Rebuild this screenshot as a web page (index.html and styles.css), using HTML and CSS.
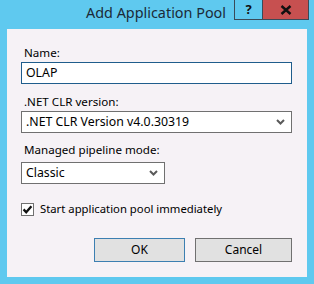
FILE: index.html
```html
<html lang="en">
<head>
    <meta charset="UTF-8">
    <title>Add Application Pool</title>
    <link rel="stylesheet" href="styles.css">
</head>
<body>
    <div class="window">
        <div class="titlebar">
            <div class="title">Add Application Pool</div>
            <div class="caption-buttons">
                <div class="help">?</div>
                <div class="close">
                    <svg width="12" height="10" viewBox="0 0 12 10">
                        <path d="M1.5 1 L10.5 9 M10.5 1 L1.5 9" stroke="#101010" stroke-width="2.4"/>
                    </svg>
                </div>
            </div>
        </div>
        <div class="panel">
            <div class="label name-label">Name:</div>
            <div class="textbox">OLAP</div>

            <div class="label clr-label">.NET CLR version:</div>
            <div class="dropdown wide">
                <span>.NET CLR Version v4.0.30319</span>
                <svg class="chevron" width="9" height="6" viewBox="0 0 9 6">
                    <path d="M1 1 L4.5 4.5 L8 1" stroke="#5a5a5a" stroke-width="2" fill="none"/>
                </svg>
            </div>

            <div class="label pipe-label">Managed pipeline mode:</div>
            <div class="dropdown narrow">
                <span>Classic</span>
                <svg class="chevron" width="9" height="6" viewBox="0 0 9 6">
                    <path d="M1 1 L4.5 4.5 L8 1" stroke="#5a5a5a" stroke-width="2" fill="none"/>
                </svg>
            </div>

            <div class="check-row">
                <svg class="checkbox" width="13" height="13" viewBox="0 0 13 13">
                    <rect x="0.5" y="0.5" width="12" height="12" fill="#ffffff" stroke="#707070"/>
                    <path d="M2.6 6.4 L5.2 9.2 L10.4 3.3" stroke="#111" stroke-width="2.3" fill="none"/>
                </svg>
                <span>Start application pool immediately</span>
            </div>

            <div class="buttons">
                <div class="button ok">OK</div>
                <div class="button cancel">Cancel</div>
            </div>
        </div>
    </div>
</body>
</html>
```

FILE: styles.css
```css
body {
    margin: 0;
    background-color: #5fc9ef;
    font-family: "Noto Sans", "Open Sans", sans-serif;
    font-size: 11.6px;
    color: #000;
}

.window {
    width: 314px;
    height: 284px;
    display: flex;
    flex-direction: column;
}

.titlebar {
    height: 29px;
    position: relative;
}

.title {
    position: absolute;
    left: 86px;
    top: 3px;
    font-size: 14.4px;
    line-height: 20px;
    color: #1b2a38;
}

.caption-buttons {
    position: absolute;
    left: 234px;
    top: 0;
    display: flex;
}

.help {
    width: 27px;
    height: 19px;
    border: 1px solid #3a4a58;
    border-top: none;
    font-weight: bold;
    font-size: 13px;
    line-height: 19px;
    text-align: center;
    color: #101010;
}

.close {
    width: 45px;
    height: 19px;
    border: 1px solid #3a4a58;
    border-left: none;
    border-top: none;
    background-color: #c75050;
    display: flex;
    justify-content: center;
    align-items: center;
}

.panel {
    margin: 0 7px;
    height: 248px;
    background-color: #f6f2f6;
    padding: 16px 15px 0 14px;
    box-sizing: border-box;
}

.label {
    line-height: 16px;
    padding-left: 3px;
}

.name-label {
    margin-bottom: 1px;
}

.clr-label {
    margin-top: 10px;
    margin-bottom: 1px;
}

.pipe-label {
    margin-top: 9px;
    margin-bottom: 4px;
}

.textbox {
    height: 20px;
    border: 1px solid #1f5d8c;
    background-color: #fff;
    padding-left: 4px;
    line-height: 20px;
    font-size: 12.3px;
}

.dropdown {
    height: 20px;
    border: 1px solid #707070;
    background-color: #fff;
    padding: 0 6px 0 4px;
    display: flex;
    justify-content: space-between;
    align-items: center;
    line-height: 20px;
    font-size: 12.3px;
}

.narrow {
    width: 132px;
}

.check-row {
    margin-top: 18px;
    display: flex;
    align-items: center;
    gap: 6px;
    line-height: 14px;
    font-size: 11.3px;
}

.buttons {
    margin-top: 22px;
    display: flex;
    justify-content: flex-end;
    gap: 10px;
}

.button {
    height: 22px;
    line-height: 22px;
    text-align: center;
    background-color: #e1e1e1;
    border: 1px solid #707070;
    font-size: 12px;
}

.ok {
    width: 89px;
    border-color: #3c7fb1;
}

.cancel {
    width: 95px;
}
```
